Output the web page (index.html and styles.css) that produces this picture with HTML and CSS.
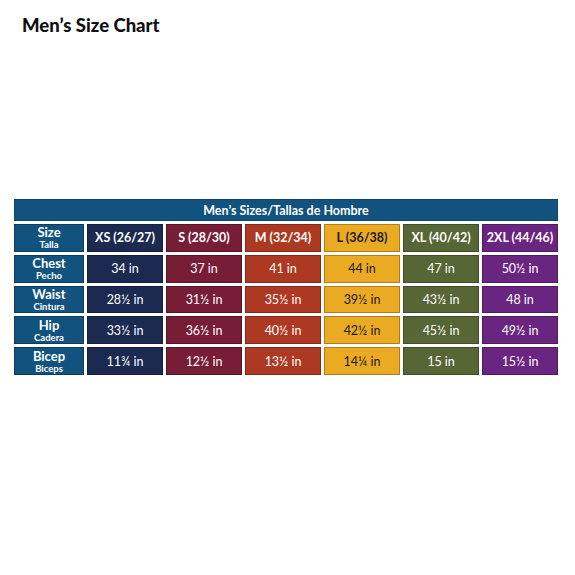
FILE: index.html
```html
<!DOCTYPE html>
<html lang="en">
<head>
    <meta charset="UTF-8">
    <meta name="viewport" content="width=device-width, initial-scale=1.0">
    <title>Men's Size Chart</title>
    <link rel="stylesheet" href="styles.css">
</head>
<body>
    <h1 class="title">Men’s Size Chart</h1>
    <div class="chart">
        <div class="chart-head">Men’s Sizes/Tallas de Hombre</div>
        <div class="grid">
            <div class="cell label">Size<small>Talla</small></div>
            <div class="cell size xs">XS (26/27)</div>
            <div class="cell size s">S (28/30)</div>
            <div class="cell size m">M (32/34)</div>
            <div class="cell size l">L (36/38)</div>
            <div class="cell size xl">XL (40/42)</div>
            <div class="cell size xxl">2XL (44/46)</div>

            <div class="cell label">Chest<small>Pecho</small></div>
            <div class="cell xs">34 in</div>
            <div class="cell s">37 in</div>
            <div class="cell m">41 in</div>
            <div class="cell l">44 in</div>
            <div class="cell xl">47 in</div>
            <div class="cell xxl">50½ in</div>

            <div class="cell label">Waist<small>Cintura</small></div>
            <div class="cell xs">28½ in</div>
            <div class="cell s">31½ in</div>
            <div class="cell m">35½ in</div>
            <div class="cell l">39½ in</div>
            <div class="cell xl">43½ in</div>
            <div class="cell xxl">48 in</div>

            <div class="cell label">Hip<small>Cadera</small></div>
            <div class="cell xs">33½ in</div>
            <div class="cell s">36½ in</div>
            <div class="cell m">40½ in</div>
            <div class="cell l">42½ in</div>
            <div class="cell xl">45½ in</div>
            <div class="cell xxl">49½ in</div>

            <div class="cell label">Bicep<small>Biceps</small></div>
            <div class="cell xs">11¾ in</div>
            <div class="cell s">12½ in</div>
            <div class="cell m">13½ in</div>
            <div class="cell l">14¼ in</div>
            <div class="cell xl">15 in</div>
            <div class="cell xxl">15½ in</div>
        </div>
    </div>
</body>
</html>
```

FILE: styles.css
```css
body {
    margin: 0;
    padding: 0;
    background: #fff;
    font-family: Lato, "Open Sans", sans-serif;
}
.title {
    margin: 0;
    padding: 13px 0 0 22px;
    font-size: 18.5px;
    line-height: 24px;
    font-weight: 900;
    color: #111;
}
.chart {
    margin: 162px 17px 0 14px;
    display: flex;
    flex-direction: column;
    gap: 3px;
}
.chart-head {
    height: 22px;
    background: #11527f;
    color: #fff;
    font-weight: 700;
    font-size: 12.5px;
    display: flex;
    justify-content: center;
    align-items: center;
    border: 1px solid #0d4570;
    box-sizing: border-box;
}
.grid {
    display: grid;
    grid-template-columns: 70px repeat(6, 1fr);
    grid-auto-rows: 27.8px;
    gap: 3px;
}
.cell {
    display: flex;
    flex-direction: column;
    justify-content: center;
    align-items: center;
    color: #fff;
    font-size: 12.5px;
    box-sizing: border-box;
    border: 1px solid rgba(0, 0, 0, 0.25);
}
.label {
    background: #11527f;
    font-weight: 700;
    font-size: 13px;
    line-height: 14px;
}
.label small {
    font-size: 9.5px;
    line-height: 11px;
}
.size {
    font-weight: 700;
    font-size: 12.5px;
}
.xs { background: #1c2a52; }
.s { background: #771d36; }
.m { background: #ae3922; }
.l { background: #eaab22; color: #1a1a1a; }
.xl { background: #566634; }
.xxl { background: #6a2580; }
```
